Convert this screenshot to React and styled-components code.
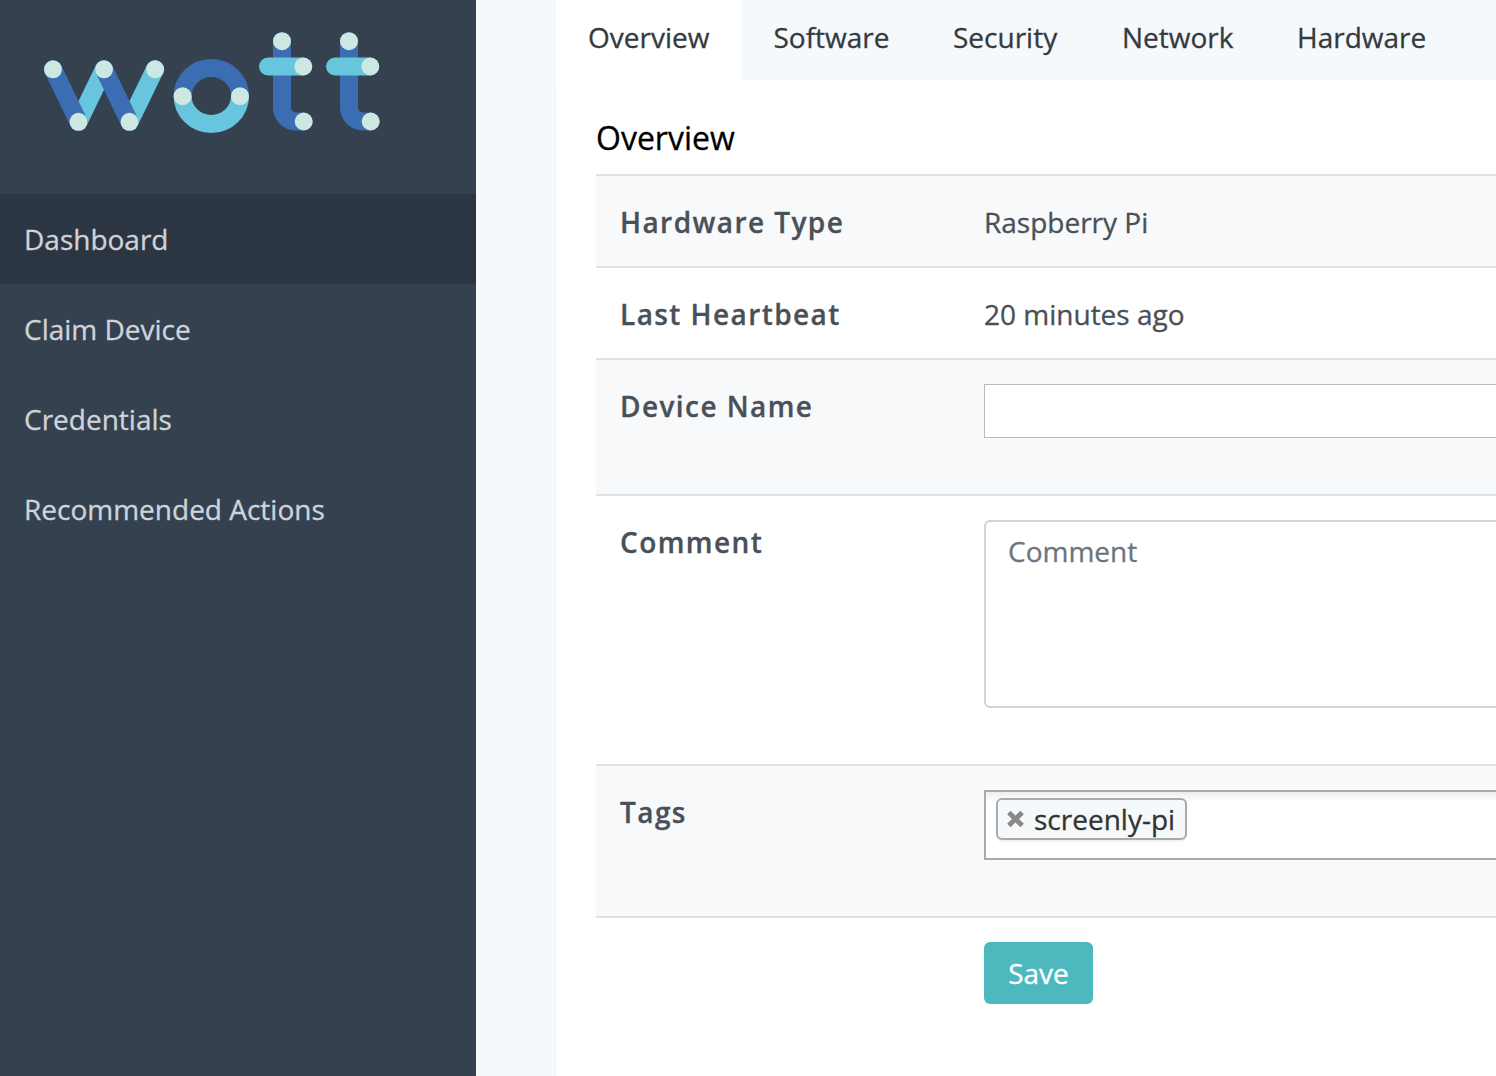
import React from "react";
import styled, { createGlobalStyle } from "styled-components";

const GlobalStyle = createGlobalStyle`
  * { box-sizing: border-box; }
  body {
    margin: 0;
    overflow: hidden;
    background: #f5f9fc;
    color: #495057;
    font-family: "Open Sans", "Noto Sans", sans-serif;
    font-size: 28px;
    line-height: 42px;
    -webkit-text-stroke: 0.3px currentColor;
  }
`;

const Page = styled.div`
  display: flex;
  height: 1076px;
  overflow: hidden;
`;

const Sidebar = styled.aside`
  flex: 0 0 476px;
  background: #364150;
`;

const Brand = styled.div`
  height: 194px;
  padding: 24px 0 0 36px;
`;

const LogoSvg = styled.svg`
  display: block;
  fill: none;
  stroke-width: 18;
  stroke-linecap: round;
`;

const NavItem = styled.a`
  display: block;
  height: 90px;
  padding: 24px 24px 0;
  color: #ced4da;
  background: ${(p) => (p.$active ? "#2c3542" : "transparent")};
`;

const Main = styled.main`
  flex: 1;
  min-width: 0;
  padding-left: 80px;
  display: flex;
  flex-direction: column;
`;

const Tabs = styled.nav`
  display: flex;
  flex: 0 0 80px;
`;

const Tab = styled.a`
  width: ${(p) => p.$width}px;
  flex: none;
  padding: 16px 0 0 ${(p) => p.$inset || 32}px;
  white-space: nowrap;
  color: #343a40;
  background: ${(p) => (p.$active ? "#fff" : "transparent")};
`;

const Panel = styled.section`
  flex: 1;
  padding: 34px 0 0 40px;
  background: #fff;
  box-shadow: 0 2px 2px rgba(0, 0, 0, 0.06);
`;

const Heading = styled.h1`
  height: 60px;
  margin: 0;
  font-size: 32px;
  font-weight: 400;
  line-height: 48px;
  color: #000;
`;

const Row = styled.div`
  display: grid;
  grid-template-columns: 364px 1fr;
  height: ${(p) => p.$height}px;
  padding: 24px 0 0 24px;
  border-top: 2px solid #dee2e6;
  background: ${(p) => (p.$striped ? "#f8f9fb" : "#fff")};
`;

const Label = styled.div`
  padding-top: 1px;
  font-weight: 600;
  letter-spacing: 1.42px;
`;

const Field = styled.div`
  min-width: 0;
`;

const Value = styled(Field)`
  padding-top: 1px;
`;

const NameInput = styled.input`
  display: block;
  width: 620px;
  height: 54px;
  border: 1px solid #bbb;
  border-radius: 0;
  background: #fff;
  outline: none;
`;

const CommentBox = styled.textarea`
  display: block;
  width: 620px;
  height: 188px;
  padding: 8px 22px;
  border: 2px solid #ced4da;
  border-radius: 6px;
  background: #fff;
  font: inherit;
  resize: none;
  &::placeholder { color: #6c757d; opacity: 1; -webkit-text-stroke: 0.3px #6c757d; }
`;

const TagsBox = styled.div`
  width: 620px;
  height: 70px;
  padding: 6px 10px;
  border: 2px solid #aaa;
  background: linear-gradient(#eee 0, #fff 10px);
`;

const Tag = styled.span`
  display: flex;
  align-items: center;
  gap: 10px;
  width: 191px;
  height: 42px;
  padding-left: 9px;
  border: 2px solid #aaa;
  border-radius: 6px;
  background: #f5f9fc;
  box-shadow: 0 2px 1px rgba(0, 0, 0, 0.05);
  color: #333;
  white-space: nowrap;
`;

const SaveButton = styled.button`
  display: block;
  width: 109px;
  height: 62px;
  padding: 0;
  border: 0;
  border-radius: 6px;
  background: #4db9bf;
  color: #fff;
  font: inherit;
`;

const Dots = ({ points }) =>
  points.map(([x, y]) => <circle key={`${x}-${y}`} cx={x} cy={y} r="9" fill="#cde7e3" />);

const LetterT = ({ x }) => (
  <g transform={`translate(${x} 0)`}>
    <path d="M282 41V107.5A14 14 0 0 0 296 121.5H303.5" stroke="#3b6db3" />
    <path d="M268 66.5H303" stroke="#68c5de" />
    <Dots points={[[282, 41.2], [303.3, 66.5], [303.7, 121.5]]} />
  </g>
);

const Logo = () => (
  <LogoSvg width="352" height="116" viewBox="36 24 352 116" role="img" aria-label="wott">
    <path d="M78.5 121.8L104 69.3M129.5 121.8L155 69.3" stroke="#68c5de" />
    <path d="M53 69.3L78.5 121.8M104 69.3L129.5 121.8" stroke="#3b6db3" />
    <Dots points={[[53, 69.3], [78.5, 121.8], [104, 69.3], [129.5, 121.8], [155.1, 69.3]]} />
    <g strokeLinecap="butt">
      <path d="M182.6 96A28.7 28 0 0 1 240 96" stroke="#3b6db3" />
      <path d="M182.6 96A28.7 28 0 0 0 240 96" stroke="#68c5de" />
    </g>
    <Dots points={[[182.6, 96.2], [240, 96.2]]} />
    <LetterT x={0} />
    <LetterT x={67} />
  </LogoSvg>
);

const RemoveIcon = () => (
  <svg width="17" height="16" viewBox="0 0 17 16" aria-hidden="true">
    <path d="M3.6 3.2L13.4 12.8M13.4 3.2L3.6 12.8" stroke="#888" strokeWidth="4.9" strokeLinecap="square" />
  </svg>
);

export default function App() {
  return (
    <Page>
      <GlobalStyle />
      <Sidebar>
        <Brand><Logo /></Brand>
        <nav>
          <NavItem $active>Dashboard</NavItem>
          <NavItem>Claim Device</NavItem>
          <NavItem>Credentials</NavItem>
          <NavItem>Recommended Actions</NavItem>
        </nav>
      </Sidebar>
      <Main>
        <Tabs>
          <Tab $width={186} $active>Overview</Tab>
          <Tab $width={179} $inset={31.5}>Software</Tab>
          <Tab $width={169}>Security</Tab>
          <Tab $width={175}>Network</Tab>
          <Tab $width={194}>Hardware</Tab>
        </Tabs>
        <Panel>
          <Heading>Overview</Heading>
          <Row $height={92} $striped><Label>Hardware Type</Label><Value>Raspberry Pi</Value></Row>
          <Row $height={92}><Label>Last Heartbeat</Label><Value>20 minutes ago</Value></Row>
          <Row $height={136} $striped>
            <Label>Device Name</Label>
            <Field><NameInput aria-label="Device Name" /></Field>
          </Row>
          <Row $height={270}>
            <Label>Comment</Label>
            <Field><CommentBox placeholder="Comment" /></Field>
          </Row>
          <Row $height={152} $striped>
            <Label>Tags</Label>
            <Field><TagsBox><Tag><RemoveIcon />screenly-pi</Tag></TagsBox></Field>
          </Row>
          <Row $height={158}>
            <Label />
            <Field><SaveButton>Save</SaveButton></Field>
          </Row>
        </Panel>
      </Main>
    </Page>
  );
}
